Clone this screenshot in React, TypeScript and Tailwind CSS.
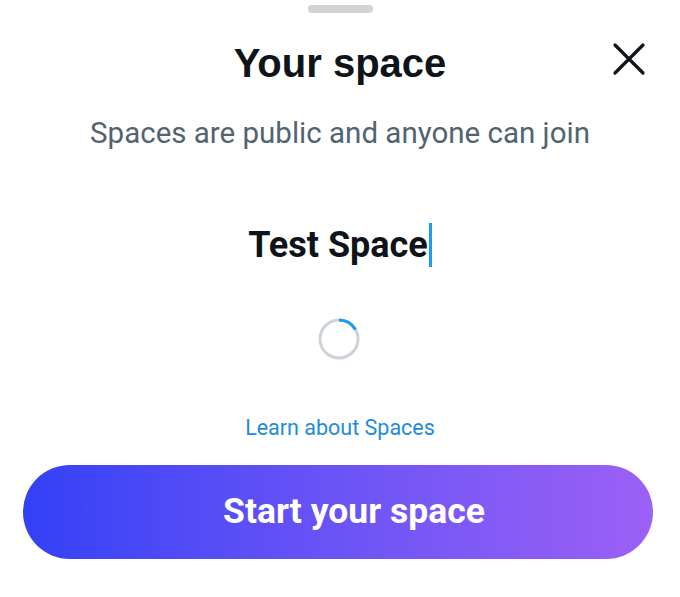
import React from "react";

export default function App() {
  return (
    <div className="w-[680px] h-[597px] bg-white relative overflow-hidden" style={{ fontFamily: "Roboto, sans-serif" }}>
      <div className="flex justify-center pt-[5px]">
        <div className="w-[65px] h-[8px] rounded-full bg-[#d3d3d3]" />
      </div>
      <div className="relative flex justify-center mt-[22px]">
        <h1 className="text-[40px] leading-[56px] font-bold text-[#0f1419]" style={{ fontFamily: '"Liberation Sans", Arial, sans-serif' }}>
          Your space
        </h1>
        <button className="absolute left-[611px] top-[6px] w-[36px] h-[36px] flex items-center justify-center">
          <svg width="36" height="36" viewBox="0 0 36 36">
            <path d="M4 4 L32 32 M32 4 L4 32" stroke="#0f1419" strokeWidth="3.2" strokeLinecap="round" />
          </svg>
        </button>
      </div>
      <p className="text-center text-[29.5px] leading-[38px] text-[#536471] mt-[23px]">
        Spaces are public and anyone can join
      </p>
      <div className="flex justify-center mt-[70px]">
        <div className="relative flex items-center">
          <span className="text-[36px] leading-[46px] font-bold text-[#0f1419]">Test Space</span>
          <span className="w-[3px] h-[44px] bg-[#1d9bf0] ml-[1px]" />
        </div>
      </div>
      <div className="flex justify-center mt-[49px] pr-[3px]">
        <svg width="44" height="44" viewBox="0 0 44 44">
          <circle cx="22" cy="22" r="19" fill="none" stroke="#ccd3d9" strokeWidth="3" />
          <path d="M22 3 A19 19 0 0 1 38.45 12.5" fill="none" stroke="#1d9bf0" strokeWidth="3" />
        </svg>
      </div>
      <div className="flex justify-center mt-[53px]">
        <span className="text-[21.5px] leading-[28px] text-[#1d8cd8]">Learn about Spaces</span>
      </div>
      <div className="px-[23px] mt-[23px] pr-[27px]">
        <button className="w-full h-[94px] rounded-full bg-gradient-to-r from-[#3340f6] to-[#9c60f5] flex items-center justify-center pl-[32px]">
          <span className="text-white text-[35.5px] font-bold">Start your space</span>
        </button>
      </div>
    </div>
  );
}
